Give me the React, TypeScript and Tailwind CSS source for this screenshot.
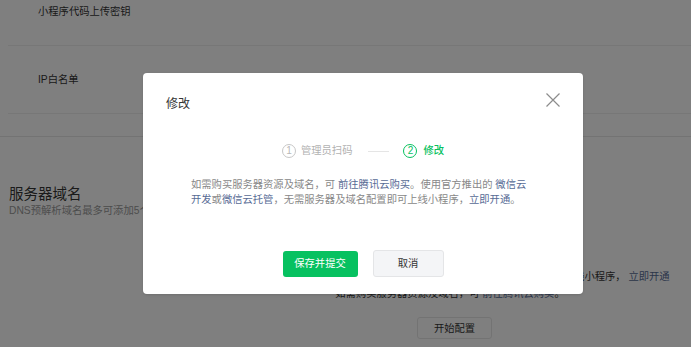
const font = {
  fontFamily: '"Liberation Sans", "Noto Sans CJK SC", sans-serif',
};

function Steps() {
  return (
    <div className="flex items-center justify-center h-[14px] mt-[31px]">
      <div className="w-[14px] h-[14px] rounded-full border border-[#c7c7c7] flex items-center justify-center text-[10px] leading-none text-[#b8b8b8]">
        1
      </div>
      <span className="ml-[5px] text-[10.3px] leading-[14px] text-[#b2b2b2]">管理员扫码</span>
      <div className="ml-[16px] w-[21px] h-px bg-[#e5e5e5]" />
      <div className="ml-[14px] w-[14px] h-[14px] rounded-full border border-[#07c160] flex items-center justify-center text-[10px] leading-none text-[#07c160]">
        2
      </div>
      <span className="ml-[6px] text-[10.3px] leading-[14px] font-medium text-[#07c160]">修改</span>
    </div>
  );
}

function Modal() {
  return (
    <div className="absolute left-[143px] top-[73px] w-[440px] h-[221px] bg-white rounded-[4px] shadow-sm">
      <div className="pt-[23px] pl-[23px] text-[12px] leading-[17px] text-[#353535]">修改</div>
      <button className="absolute right-[23px] top-[20px] w-[14px] h-[14px]">
        <svg width="14" height="14" viewBox="0 0 14 14" fill="none">
          <path d="M0.5 0.5L13.5 13.5M13.5 0.5L0.5 13.5" stroke="#8c8c8c" strokeWidth="1.2" />
        </svg>
      </button>
      <Steps />
      <p className="mt-[19px] px-[48px] text-[10.3px] leading-[15px] text-[#888888]">
        如需购买服务器资源及域名，可 <a className="text-[#576b95]">前往腾讯云购买</a>。使用官方推出的{" "}
        <a className="text-[#576b95]">微信云开发</a>或<a className="text-[#576b95]">微信云托管</a>
        ，无需服务器及域名配置即可上线小程序，<a className="text-[#576b95]">立即开通</a>。
      </p>
      <div className="mt-[44px] flex justify-center gap-[15px]">
        <button className="w-[75px] h-[26px] rounded-[3px] bg-[#07c160] text-white text-[10.3px]">
          保存并提交
        </button>
        <button className="w-[71px] h-[27px] -mt-px rounded-[3px] bg-[#f4f5f7] border border-[#e4e5e7] text-[#353535] text-[10.3px]">
          取消
        </button>
      </div>
    </div>
  );
}

export default function App() {
  return (
    <div className="relative w-[691px] h-[347px] overflow-hidden bg-white" style={font}>
      <div className="border-b border-[#e6e6e6]">
        <div className="pl-[8px] -mt-[22px]">
          <div className="h-[68px] flex items-center pl-[30px] border-b border-[#eeeeee] text-[10.3px] text-[#353535]">
            小程序代码上传密钥
          </div>
          <div className="h-[68px] flex items-center pl-[30px] border-b border-[#eeeeee] text-[10.3px] text-[#353535]">
            IP白名单
          </div>
          <div className="h-[22px]" />
        </div>
      </div>

      <div className="pl-[9px] pt-[49px]">
        <div className="text-[14.5px] leading-[17px] text-[#353535]">服务器域名</div>
        <div className="text-[10.3px] leading-[15px] text-[#9a9a9a] whitespace-nowrap">
          DNS预解析域名最多可添加5个，每月可修改5次
        </div>
      </div>

      <div className="ml-[236px] w-[428px] mt-[50px] text-center text-[10.3px] leading-[17px] text-[#353535] whitespace-nowrap">
        <div>
          使用官方推出的 <a className="text-[#576b95]">微信云开发</a> 或 <a className="text-[#576b95]">微信云托管</a>，无需服务器及域名配置即可上线小程序，{" "}
          <a className="text-[#576b95]">立即开通</a>
        </div>
        <div>
          如需购买服务器资源及域名，可 <a className="text-[#576b95]">前往腾讯云购买</a>。
        </div>
        <button className="mt-[15px] ml-[9px] w-[75px] h-[22px] rounded-[3px] border border-[#e6e6e6] bg-white text-[10.3px] text-[#353535]">
          开始配置
        </button>
      </div>

      <div className="absolute inset-0 bg-black/50">
        <Modal />
      </div>
    </div>
  );
}
